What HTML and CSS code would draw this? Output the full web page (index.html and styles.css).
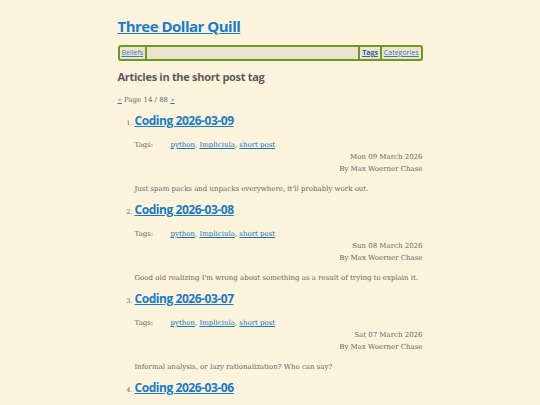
FILE: index.html
```html
<!DOCTYPE html>
<html lang="en">
<head>
<meta charset="utf-8">
<title>Three Dollar Quill</title>
<link rel="stylesheet" href="styles.css">
</head>
<body>
<div class="page">
  <header class="site-header">
    <h1 class="site-title"><a href="#">Three Dollar Quill</a></h1>
    <nav class="nav">
      <div class="nav-left"><a href="#">Beliefs</a></div>
      <div class="nav-right"><a href="#" class="active">Tags</a><a href="#">Categories</a></div>
    </nav>
  </header>
  <main>
    <h2 class="tag-heading">Articles in the short post tag</h2>
    <p class="pager"><a href="#">«</a> Page 14 / 88 <a href="#">»</a></p>
    <ol class="articles">
      <li class="article">
        <h3 class="article-title"><a href="#">Coding 2026-03-09</a></h3>
        <div class="tags"><span class="tags-label">Tags:</span><span class="tags-list"><a href="#">python</a>, <a href="#">Impliciula</a>, <a href="#">short post</a></span></div>
        <div class="meta"><div>Mon 09 March 2026</div><div>By Max Woerner Chase</div></div>
        <p class="summary">Just spam packs and unpacks everywhere, it'll probably work out.</p>
      </li>
      <li class="article">
        <h3 class="article-title"><a href="#">Coding 2026-03-08</a></h3>
        <div class="tags"><span class="tags-label">Tags:</span><span class="tags-list"><a href="#">python</a>, <a href="#">Impliciula</a>, <a href="#">short post</a></span></div>
        <div class="meta"><div>Sun 08 March 2026</div><div>By Max Woerner Chase</div></div>
        <p class="summary">Good old realizing I'm wrong about something as a result of trying to explain it.</p>
      </li>
      <li class="article">
        <h3 class="article-title"><a href="#">Coding 2026-03-07</a></h3>
        <div class="tags"><span class="tags-label">Tags:</span><span class="tags-list"><a href="#">python</a>, <a href="#">Impliciula</a>, <a href="#">short post</a></span></div>
        <div class="meta"><div>Sat 07 March 2026</div><div>By Max Woerner Chase</div></div>
        <p class="summary">Informal analysis, or lazy rationalization? Who can say?</p>
      </li>
      <li class="article">
        <h3 class="article-title"><a href="#">Coding 2026-03-06</a></h3>
        <div class="tags"><span class="tags-label">Tags:</span><span class="tags-list"><a href="#">python</a>, <a href="#">Impliciula</a>, <a href="#">short post</a></span></div>
        <div class="meta"><div>Fri 06 March 2026</div><div>By Max Woerner Chase</div></div>
        <p class="summary">More of the same.</p>
      </li>
    </ol>
  </main>
</div>
</body>
</html>
```
FILE: styles.css
```css
html, body {
  margin: 0;
  padding: 0;
  background: #fbf3dc;
}
body {
  font-family: "DejaVu Serif", serif;
  color: #666666;
  font-size: 7px;
}
a {
  color: #1a73c0;
}
.page {
  width: 305px;
  margin: 0 auto;
  padding-top: 14px;
}
.site-title {
  margin: 0;
  font-family: "Open Sans", sans-serif;
  font-size: 15px;
  font-weight: 700;
  letter-spacing: -0.5px;
  line-height: 24px;
}
.site-title a {
  color: #1a7bc9;
}
.nav {
  margin-top: 7px;
  display: flex;
  justify-content: space-between;
  height: 12px;
  border: 2px solid #6b9a20;
  border-radius: 3px;
  background: #ece4cf;
  font-family: "Open Sans", sans-serif;
  font-size: 7px;
  line-height: 12px;
}
.nav a {
  color: #3a7cc0;
  padding: 0 2px;
}
.nav-left a {
  border-right: 2px solid #6b9a20;
  display: inline-block;
}
.nav-right {
  display: flex;
}
.nav-right a {
  border-left: 2px solid #6b9a20;
  display: inline-block;
}
.nav-right a.active {
  font-weight: 700;
  color: #2a65a0;
}
.tag-heading {
  margin: 8px 0 0;
  font-family: "Open Sans", sans-serif;
  font-size: 11px;
  font-weight: 700;
  letter-spacing: -0.3px;
  line-height: 16px;
  color: #5b5b5b;
}
.pager {
  margin: 9px 0 0;
  font-size: 7px;
  line-height: 12px;
}
.articles {
  margin: 6px 0 0;
  padding-left: 17px;
}
.article {
  font-size: 6.5px;
  height: 89px;
}
.article-title {
  margin: 0;
  font-family: "Open Sans", sans-serif;
  font-size: 12px;
  font-weight: 700;
  letter-spacing: -0.45px;
  line-height: 18px;
}
.article-title a {
  color: #1a7bc9;
}
.tags {
  margin-top: 9px;
  display: flex;
  font-size: 7px;
  line-height: 12px;
}
.tags-label {
  width: 36px;
}
.meta {
  text-align: right;
  font-size: 7px;
  line-height: 12px;
}
.summary {
  margin: 8px 0 0;
  font-size: 7px;
  line-height: 12px;
}
```
